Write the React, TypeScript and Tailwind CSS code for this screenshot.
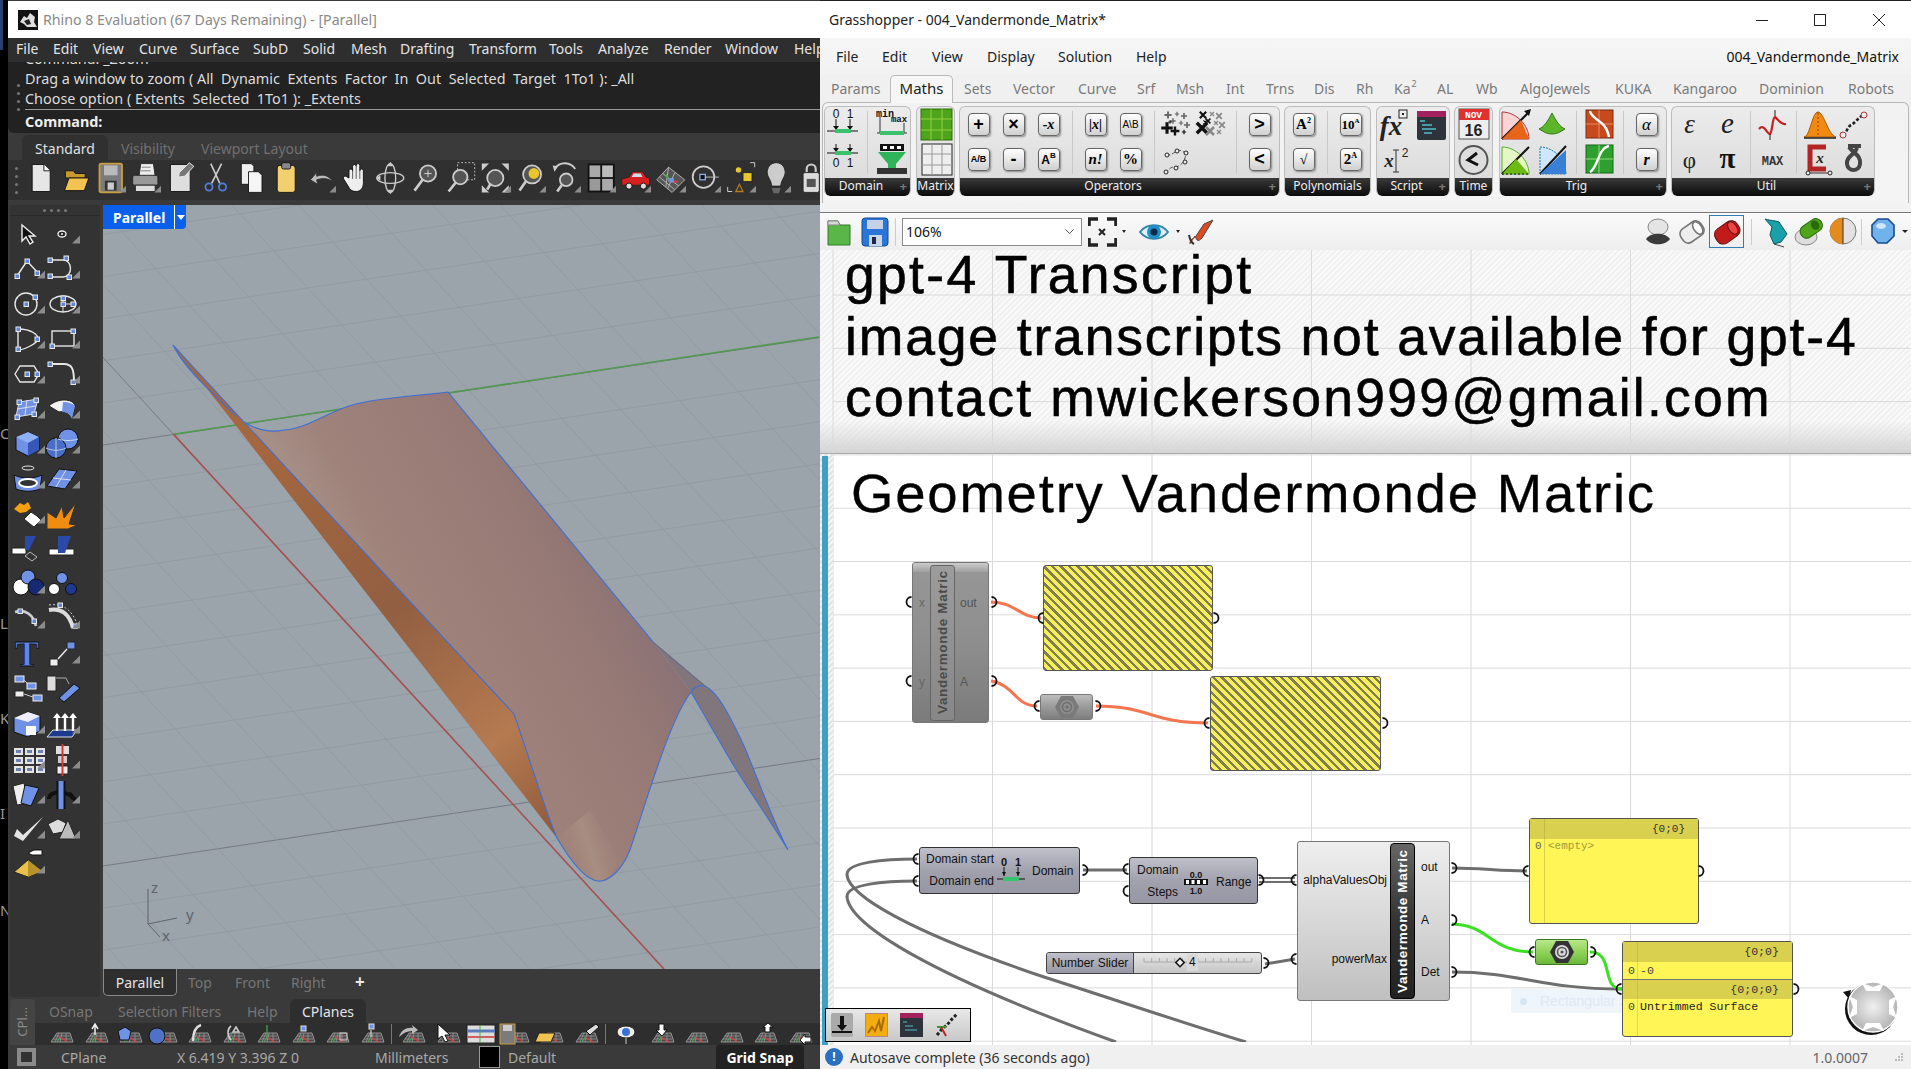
import React from "react";

const UI = "[font-family:'Noto_Sans',sans-serif]";
const AR = "[font-family:'Liberation_Sans',Arial,sans-serif]";
const MONO = "[font-family:'Liberation_Mono',monospace]";
const SERIF = "Liberation Serif, serif";
const SANS = "Liberation Sans, sans-serif";

type IP = { w?: number; h?: number; t?: boolean; children?: React.ReactNode };
const Ic = ({ w = 35, h = 35, t, children }: IP) => (
  <svg width={w} height={h} viewBox={`0 0 ${w} ${h}`} className="block shrink-0">
    {children}
    {t && <polygon points={`${w - 8},${h / 2 + 9} ${w},${h / 2 + 9} ${w},${h / 2 + 1}`} fill="#8c8c8c" />}
  </svg>
);
const P = ({ x, y }: { x: number; y: number }) => <rect x={x - 2} y={y - 2} width="4.5" height="4.5" fill="#5f86d8" stroke="#e8e8e8" strokeWidth="1" />;
const L = "#e6e6e6";
const B = "#6f92e6";

/* ---------- Rhino side toolbar ---------- */
const sideIcons: React.ReactNode[] = [
  <Ic><path d="M12 8l0 16 4-4 4 7 3-2-4-6 6 0z" fill="#111" stroke="#eee" strokeWidth="1.4" /></Ic>,
  <Ic t><ellipse cx="17" cy="17" rx="4" ry="3" fill="#222" stroke="#eee" strokeWidth="1.4" /><circle cx="17" cy="17" r="1" fill="#fff" /></Ic>,
  <Ic t><path d="M7 24L17 9l11 12" fill="none" stroke={L} strokeWidth="1.4" /><P x={7} y={24} /><P x={17} y={9} /><P x={27} y={21} /></Ic>,
  <Ic t><path d="M4 8h14c10 0 10 17 0 17H8" fill="none" stroke={L} strokeWidth="1.4" /><P x={5} y={8} /><P x={21} y={6} /><P x={5} y={24} /><P x={24} y={25} /></Ic>,
  <Ic t><circle cx="16" cy="17" r="11" fill="none" stroke={L} strokeWidth="1.4" /><P x={16} y={17} /><P x={25} y={10} /></Ic>,
  <Ic t><ellipse cx="18" cy="17" rx="13" ry="8" fill="none" stroke={L} strokeWidth="1.4" /><path d="M18 9v16M18 17h12" stroke={L} /><P x={18} y={11} /><P x={18} y={17} /><P x={28} y={17} /></Ic>,
  <Ic t><path d="M8 7c14 0 20 6 20 10S14 28 8 28z" fill="none" stroke={L} strokeWidth="1.4" /><P x={8} y={7} /><P x={27} y={17} /><P x={8} y={27} /></Ic>,
  <Ic t><rect x="7" y="9" width="22" height="15" fill="none" stroke={L} strokeWidth="1.4" /><P x={28} y={9} /><P x={7} y={24} /></Ic>,
  <Ic t><path d="M5 17l5-8h14l5 8-5 8H10z" fill="none" stroke={L} strokeWidth="1.4" /><P x={17} y={17} /><P x={27} y={17} /></Ic>,
  <Ic t><path d="M5 7h14c8 0 10 5 10 18" fill="none" stroke={L} strokeWidth="2" /><P x={5} y={7} /><P x={28} y={25} /></Ic>,
  <Ic t><path d="M9 10l19-3-4 15-18 3z" fill={B} stroke="#dde" /><path d="M17 8l-2 15M7 17l19-3" stroke="#dde" /><P x={9} y={10} /><P x={26} y={8} /><P x={7} y={25} /><P x={24} y={22} /></Ic>,
  <Ic t><path d="M4 14C12 6 28 6 30 14l-3 13c-4-8-10-8-13-7z" fill="#f2f2f2" stroke="#222" /><path d="M18 10c6 0 10 2 12 4l-3 13c-2-5-5-7-10-7z" fill={B} /></Ic>,
  <Ic t><path d="M6 10l12-5 11 5v13l-11 6-12-6z" fill={B} stroke="#111" /><path d="M6 10l12 6 11-6-11-5z" fill="#8fb0f5" /><path d="M18 16v13l11-6V10z" fill="#3558b8" /></Ic>,
  <Ic t><circle cx="23" cy="12" r="10" fill={B} stroke="#111" /><circle cx="11" cy="21" r="10" fill="#4a6ec8" stroke="#111" /><path d="M1 21c6 3 14 3 20 0M11 11v20" stroke="#bcd" fill="none" /><path d="M13 12c6 2 14 2 20 0" stroke="#cde" fill="none" /></Ic>,
  <Ic t><ellipse cx="18" cy="6" rx="6" ry="2" fill="none" stroke={L} /><path d="M4 13c8 4 20 4 28 0l-2 14c-8 3-16 3-24 0z" fill={B} stroke="#111" /><ellipse cx="18" cy="21" rx="9" ry="4" fill="#333" stroke="#fff" strokeWidth="2" /></Ic>,
  <Ic t><path d="M14 7l18 2-12 18-18-3z" fill={B} stroke="#111" /><path d="M21 8L11 25M8 16l18 2" stroke="#dde" /></Ic>,
  <Ic t><path d="M4 12l6-6 4 2 4-3 3 6-5 4-6 1z" fill="#f5a10f" /><path d="M14 22l7-7 6 4 4 4-7 7-4-3z" fill="#fff" stroke="#222" /></Ic>,
  <Ic><path d="M2 32V15l9 6 6-12 2 12 12-15-7 21 8 1-9 4z" fill="#f08c10" stroke="#333" /></Ic>,
  <Ic><rect x="2" y="16" width="14" height="6" fill="#fff" stroke="#222" /><path d="M15 4h11l-7 14-4 0z" fill="#2b4aa8" /><path d="M20 20l7 5-5 4-7-5z" fill="#333" stroke="#bbb" /></Ic>,
  <Ic><rect x="4" y="17" width="25" height="6" fill="#fff" stroke="#222" /><path d="M13 4h13l-6 17h-7z" fill="#2b4aa8" /></Ic>,
  <Ic t><circle cx="11" cy="20" r="8" fill="#fff" stroke="#111" /><circle cx="18" cy="10" r="7" fill={B} stroke="#111" /><circle cx="26" cy="20" r="8" fill="#152a70" stroke="#111" /></Ic>,
  <Ic><circle cx="9" cy="22" r="5.5" fill="#fff" stroke="#111" /><circle cx="17" cy="11" r="5.5" fill={B} stroke="#111" /><circle cx="26" cy="22" r="5.5" fill="#1c3a90" stroke="#111" /></Ic>,
  <Ic t><path d="M5 10c10-3 18 2 21 14" fill="none" stroke="#ccc" strokeWidth="2.6" /><P x={10} y={9} /><P x={24} y={19} /></Ic>,
  <Ic t><path d="M4 8c12-2 20 3 24 18" fill="none" stroke="#ddd" strokeWidth="4" /><path d="M4 3c14-2 24 5 29 22" fill="none" stroke="#ccc" strokeDasharray="2 2" /><P x={15} y={3} /><P x={30} y={24} /></Ic>,
  <Ic><text x="17" y="29" textAnchor="middle" fontFamily={SERIF} fontWeight="700" fontSize="36" fill="#5f86e8" stroke="#111" strokeWidth=".8">T</text></Ic>,
  <Ic t><rect x="5" y="22" width="8" height="7" fill="#eee" stroke="#222" /><rect x="22" y="5" width="8" height="7" fill={B} stroke="#222" /><path d="M13 22l9-10" stroke="#eee" strokeWidth="1.4" /></Ic>,
  <Ic><rect x="5" y="4" width="9" height="6" fill={B} stroke="#eee" /><rect x="17" y="11" width="9" height="6" fill={B} stroke="#eee" /><rect x="5" y="19" width="9" height="6" fill="#eee" stroke="#222" /><rect x="23" y="23" width="9" height="6" fill={B} stroke="#eee" /><path d="M14 8l4 4M14 22l9 3" stroke="#ccc" /></Ic>,
  <Ic><rect x="2" y="4" width="9" height="15" fill="#ddd" stroke="#222" /><path d="M11 6h10l3 6" fill="none" stroke="#aaa" /><path d="M14 26L29 12l6 4-16 14z" fill={B} stroke="#111" /></Ic>,
  <Ic t><path d="M4 11l14-6 12 4v15l-12 6-14-5z" fill={B} stroke="#111" /><path d="M4 11l14 4 12-6-12-4z" fill="#eef" /><rect x="16" y="19" width="10" height="9" fill="#fff" /></Ic>,
  <Ic t><path d="M2 30l6-7h24l-5 7z" fill="#1c3a90" stroke="#ddd" /><path d="M12 24V8M20 24V8M28 24V8" stroke="#fff" strokeWidth="2.4" /><path d="M8 11l4-5 4 5zM16 11l4-5 4 5zM24 11l4-5 4 5z" fill="#fff" /></Ic>,
  <Ic t><g fill="#e4e4e4">{[4, 15, 26].map((x) => [6, 15, 24].map((y) => <rect key={`${x}${y}`} x={x} y={y} width="9" height="7" />))}</g><g fill="#6f82b8">{[6, 17, 28].map((x) => [8, 17, 26].map((y) => <rect key={`${x}${y}`} x={x} y={y} width="5" height="3" />))}</g></Ic>,
  <Ic t><rect x="11" y="4" width="13" height="8" fill="#ddd" /><rect x="13" y="14" width="9" height="7" fill="#ccc" /><rect x="12" y="24" width="11" height="8" fill="#eee" stroke="#222" /><path d="M17.5 2v32" stroke="#d33" strokeWidth="2" /></Ic>,
  <Ic t><path d="M3 9l11-3 4 20-11 2z" fill="#eee" stroke="#222" /><path d="M15 8l14 3-8 18-10-3z" fill={B} stroke="#111" /></Ic>,
  <Ic t><path d="M4 22c0-10 22-8 24 0" fill="none" stroke="#111" strokeWidth="4" /><path d="M16 4v28" stroke="#111" strokeWidth="9" /><path d="M16 4v28" stroke="#6f92e6" strokeWidth="5" /><path d="M24 16l8 9" stroke="#111" strokeWidth="4" /></Ic>,
  <Ic t><path d="M4 24l9 5 20-24-20 18-6-6z" fill="#e4e4e4" /></Ic>,
  <Ic t><path d="M3 12l10-5 8 4-3 9-10 2z" fill="#ddd" stroke="#222" /><path d="M23 8l8 19H14z" fill="#bbb" stroke="#222" /></Ic>,
  <Ic t><path d="M4 25L18 13l14 11-14 6z" fill="#e8c04a" stroke="#222" /><path d="M18 13l14 11-14 6z" fill="#b8922a" /><path d="M18 6l6-3h8v5H22z" fill="#fff" stroke="#111" /></Ic>,
];

/* ---------- Rhino top toolbar ---------- */
const Tp = ({ t, children }: { t?: boolean; children: React.ReactNode }) => (
  <svg width="31.5" height="36" viewBox="0 0 35 40" className="mx-auto block">
    {children}
    {t && <polygon points="27,36 35,36 35,28" fill="#8c8c8c" />}
  </svg>
);
const topIcons: React.ReactNode[] = [
  <Tp><path d="M8 5h13l7 7v23H8z" fill="#e6e6e6" stroke="#111" /><path d="M21 5v7h7" fill="#fff" stroke="#111" /></Tp>,
  <Tp><path d="M6 12h9l2 3h11v5H6z" fill="#c89a2a" stroke="#111" /><path d="M5 34l5-14h22l-5 14z" fill="#f2c350" stroke="#111" /></Tp>,
  <Tp t><rect x="5" y="4" width="25" height="32" rx="2" fill="#7b7b7b" stroke="#c8a040" strokeWidth="2" /><rect x="10" y="6" width="15" height="11" fill="#bbb" /><rect x="11" y="23" width="13" height="11" fill="#333" /><rect x="14" y="25" width="7" height="8" fill="#ccc" /></Tp>,
  <Tp t><path d="M12 4h14l2 14H10z" fill="#eee" stroke="#222" /><rect x="3" y="17" width="28" height="11" rx="2" fill="#999" stroke="#222" /><path d="M6 28h22v7H6z" fill="#ddd" stroke="#222" /><path d="M13 8h10M12 12h11" stroke="#777" /></Tp>,
  <Tp><path d="M6 5h22v30H6z" fill="#dedede" stroke="#111" /><path d="M16 14L27 3l5 4-10 11-7 1z" fill="#777" stroke="#eee" /></Tp>,
  <Tp><path d="M12 4l10 22M24 4L13 26" stroke="#ccc" strokeWidth="1.8" /><circle cx="10" cy="30" r="4" fill="none" stroke="#4f7fd8" strokeWidth="2" /><circle cx="25" cy="30" r="4" fill="none" stroke="#4f7fd8" strokeWidth="2" /></Tp>,
  <Tp><path d="M7 4h11l3 3v20H7z" fill="#eee" stroke="#111" /><path d="M15 13h11l4 4v19H15z" fill="#f5f5f5" stroke="#111" /></Tp>,
  <Tp><rect x="8" y="6" width="20" height="30" rx="3" fill="#f2d070" stroke="#111" /><rect x="13" y="3" width="10" height="7" rx="2" fill="#888" stroke="#111" /></Tp>,
  <Tp t><path d="M6 22l7-8v4c8-3 14 0 18 6-6-4-11-4-18-2l1 5z" fill="#bbb" stroke="#333" /></Tp>,
  <Tp><path d="M10 20V12a2 2 0 014 0v-5a2 2 0 014 0v-1a2 2 0 014 0v6a2 2 0 014 0v13c0 6-3 10-8 10s-7-2-9-6l-5-8c-1-3 2-4 4-2z" fill="#eee" stroke="#111" /><path d="M14 12v9M18 7v14M22 8v13" stroke="#555" /></Tp>,
  <Tp><ellipse cx="17" cy="20" rx="15" ry="6" fill="none" stroke="#ccc" strokeWidth="1.5" /><ellipse cx="17" cy="20" rx="6" ry="16" fill="none" stroke="#ccc" strokeWidth="1.5" /><path d="M17 2l-3 5h6zM17 38l-3-5h6zM1 20l5-3v6z" fill="#ccc" /></Tp>,
  <Tp><circle cx="20" cy="15" r="9" fill="#555" stroke="#ccc" strokeWidth="2" /><path d="M14 22L5 34" stroke="#ccc" strokeWidth="3" /><path d="M16 15h8M20 11v8" stroke="#ddd" /></Tp>,
  <Tp><rect x="14" y="3" width="19" height="19" fill="none" stroke="#ccc" strokeDasharray="2 2" /><circle cx="17" cy="19" r="8" fill="#555" stroke="#ccc" strokeWidth="2" /><path d="M12 25L4 35" stroke="#ccc" strokeWidth="3" /></Tp>,
  <Tp t><circle cx="17" cy="20" r="9" fill="#555" stroke="#ccc" strokeWidth="2" /><path d="M12 26L8 33" stroke="#ccc" strokeWidth="3" /><path d="M2 4h8L2 12zM32 4h-8l8 8zM2 36v-8l8 8zM32 36v-8l-8 8z" fill="#ccc" /></Tp>,
  <Tp t><circle cx="19" cy="16" r="10" fill="#555" stroke="#ccc" strokeWidth="2" /><circle cx="21" cy="15" r="6" fill="#e8c72c" /><path d="M12 24L5 34" stroke="#ccc" strokeWidth="3" /></Tp>,
  <Tp t><path d="M5 10c6-9 18-8 23 0" fill="none" stroke="#ccc" strokeWidth="2" /><path d="M3 6l6 1-4 6z" fill="#ccc" /><circle cx="18" cy="22" r="7" fill="#555" stroke="#ccc" strokeWidth="2" /><path d="M13 28l-5 7" stroke="#ccc" strokeWidth="3" /></Tp>,
  <Tp t><rect x="3" y="4" width="30" height="32" fill="#111" /><rect x="5" y="6" width="12" height="13" fill="#aaa" /><rect x="19" y="6" width="12" height="13" fill="#bbb" /><rect x="5" y="21" width="12" height="13" fill="#999" /><rect x="19" y="21" width="12" height="13" fill="#aaa" /></Tp>,
  <Tp t><path d="M2 28v-7l8-2 4-6h11l4 6 4 1v8z" fill="#d6201f" stroke="#222" /><path d="M15 15h8l2 4H13z" fill="#cde" /><circle cx="10" cy="29" r="3.4" fill="#ddd" stroke="#111" /><circle cx="26" cy="29" r="3.4" fill="#ddd" stroke="#111" /></Tp>,
  <Tp t><path d="M2 22L15 8l18 14-14 14z" fill="#555" stroke="#bbb" /><path d="M8.500 15l18 14M15 8l-3 22M22 14l-8 18M5 19l17 14" stroke="#bbb" /><path d="M12 16l5 8" stroke="#4ab04a" strokeWidth="2" /><path d="M17 24l9 0" stroke="#d04040" strokeWidth="2" /><rect x="15" y="20" width="6" height="5" fill="#6f92e6" /></Tp>,
  <Tp t><circle cx="15" cy="19" r="12" fill="none" stroke="#ccc" strokeWidth="2" /><rect x="11" y="16" width="6" height="6" fill="#111" stroke="#8fb0f0" strokeWidth="1.4" /><path d="M17 19h15" stroke="#ccc" /></Tp>,
  <Tp t><circle cx="15" cy="11" r="3" fill="#e8c72c" /><rect x="20" y="14" width="10" height="10" fill="#e8c72c" stroke="#222" /><path d="M16 27l-4 8h8z" fill="none" stroke="#b47a20" strokeWidth="1.4" /><path d="M28 3h5v5M3 30v5h5" fill="none" stroke="#ddd" /></Tp>,
  <Tp t><path d="M18 3c7 0 10 6 10 11 0 5-5 9-5 15H13c0-6-5-10-5-15 0-5 3-11 10-11z" fill="#ccc" stroke="#222" /><path d="M13 31h10l-2 6h-6z" fill="#666" /></Tp>,
  <Tp t><path d="M13 14v-4a5 5 0 0110 0v4" fill="none" stroke="#ccc" strokeWidth="2.4" /><rect x="9" y="14" width="18" height="22" rx="2" fill="#ddd" stroke="#222" /><rect x="13" y="21" width="10" height="9" fill="#555" /></Tp>,
];

/* ---------- CPlane row ---------- */
const Gp = ({ children }: { children?: React.ReactNode }) => (
  <svg width="35" height="22" viewBox="0 0 35 22" className="block shrink-0">
    <path d="M8 19l6-9h13l3 9z" fill="#4a4a4a" stroke="#aaa" strokeWidth=".8" />
    <path d="M12 19l4-9M17 19l2-9M23 19l0-9M10 16h18M12 13h15" stroke="#aaa" strokeWidth=".6" />
    <path d="M17 14l-3 5" stroke="#3fae4b" strokeWidth="1.2" />
    <path d="M17 14l8 5" stroke="#d64040" strokeWidth="1.2" />
    {children}
  </svg>
);
const up = <path d="M17 12V2M14 6l3-5 3 5" stroke="#eee" strokeWidth="1.5" fill="none" />;
const cpIcons: React.ReactNode[] = [
  <Gp />, <Gp>{up}</Gp>, <Gp><path d="M6 8l7-4 6 4-2 9H8z" fill="#6f92e6" stroke="#111" /></Gp>,
  <Gp><circle cx="10" cy="13" r="8" fill="#4f72c8" stroke="#111" /></Gp>, <Gp><path d="M20 2c-6 2-8 8-8 16" stroke="#ddd" strokeWidth="2.4" fill="none" /></Gp>,
  <Gp><path d="M15 3c-4 3-4 10 0 14M20 4l3 5h-6z" stroke="#ccc" fill="none" strokeWidth="1.6" /></Gp>,
  <Gp><path d="M17 14V2" stroke="#3fae4b" strokeWidth="1.2" /></Gp>, <Gp><rect x="16" y="3" width="5" height="5" fill="#6f92e6" stroke="#ddd" /></Gp>, <Gp><rect x="21" y="10" width="7" height="7" fill="none" stroke="#ccc" /></Gp>,
  <Gp><rect x="15" y="1" width="5" height="5" fill="#6f92e6" stroke="#ddd" /><path d="M17 7v7" stroke="#eee" /></Gp>, null,
  <Gp><path d="M4 14c2-7 8-10 14-9l-1-3 6 5-6 4 0-3c-5 0-9 2-13 6z" fill="#bbb" /></Gp>, <Gp><path d="M8 1v15l4-3 3 6 3-1-3-6h5z" fill="#fff" stroke="#111" /></Gp>,
  <svg width="35" height="22" viewBox="0 0 35 22" className="block shrink-0"><rect x="3" y="2" width="28" height="18" fill="#ddd" stroke="#222" /><path d="M3 8h28" stroke="#5a7ac0" strokeWidth="3" /><path d="M3 14h28" stroke="#d06060" strokeWidth="2" /><path d="M16 2v18" stroke="#3fae4b" /></svg>,
  <Gp><rect x="1" y="1" width="15" height="20" fill="#7b7b7b" stroke="#c8a040" /><rect x="4" y="2" width="9" height="6" fill="#ccc" /></Gp>, <Gp><path d="M2 19l4-9h16l-4 9z" fill="#f2c350" stroke="#222" /></Gp>, <Gp><path d="M18 8L28 1l3 3-9 8z" fill="#ddd" stroke="#111" /></Gp>, null,
  <svg width="35" height="22" viewBox="0 0 35 22" className="block shrink-0"><ellipse cx="17" cy="9" rx="9" ry="6" fill="#eee" stroke="#222" /><circle cx="17" cy="9" r="4" fill="#3b6fd8" /><path d="M17 15v6" stroke="#ccc" /></svg>,
  <Gp><path d="M15 1h5v6h3l-5 6-6-6h3z" fill="#fff" stroke="#111" /></Gp>, <Gp />, <Gp />, <Gp><path d="M23 9h-5v-5h-2l5-4 5 4h-3z" fill="#fff" stroke="#111" /></Gp>, <Gp><path d="M23 14h6v5h-6v3l-5-5 5-6z" fill="#fff" stroke="#111" /></Gp>,
];

/* ---------- surface viewport ---------- */
function Viewport() {
  const green: number[] = [];
  for (let k = -8; k < 24; k++) green.push(445 + k * 42.1);
  const red: number[] = [];
  for (let k = -18; k < 22; k++) red.push(k);
  return (
    <svg width="717" height="764" viewBox="103 205 717 764" className="block">
      <defs>
        <linearGradient id="surf" gradientUnits="userSpaceOnUse" x1="290" y1="620" x2="640" y2="430">
          <stop offset="0" stopColor="#a3857c" />
          <stop offset=".17" stopColor="#a58f86" />
          <stop offset=".3" stopColor="#9f827a" />
          <stop offset=".62" stopColor="#977a75" />
          <stop offset=".86" stopColor="#866f75" />
          <stop offset="1" stopColor="#8c747a" />
        </linearGradient>
        <linearGradient id="oran" gradientUnits="userSpaceOnUse" x1="250" y1="440" x2="560" y2="830">
          <stop offset="0" stopColor="#a5673f" />
          <stop offset=".45" stopColor="#925f42" />
          <stop offset=".78" stopColor="#b57a50" />
          <stop offset="1" stopColor="#8f5a3c" />
        </linearGradient>
        <linearGradient id="tipg" gradientUnits="userSpaceOnUse" x1="560" y1="860" x2="620" y2="840">
          <stop offset="0" stopColor="#a88a7c" stopOpacity="0" />
          <stop offset=".5" stopColor="#b8a292" stopOpacity=".4" />
          <stop offset="1" stopColor="#a88a7c" stopOpacity="0" />
        </linearGradient>
      </defs>
      <rect x="103" y="205" width="717" height="764" fill="#9ba3ab" />
      {green.map((y, i) => (
        <line key={i} x1="103" y1={y} x2="820" y2={y - 0.15 * 717} stroke={(i - 8) % 10 === 0 ? "#757b82" : "#929aa2"} strokeWidth="1" />
      ))}
      {red.map((k) => {
        const ox = 173.6 + k * 59;
        const oy = 434.4 - k * 59 * 0.15;
        return <line key={k} x1={ox - 400} y1={oy - 436} x2={ox + 700} y2={oy + 763} stroke={k === 0 ? "#777d84" : "#929aa2"} strokeWidth="1" />;
      })}
      <line x1="173.600" y1="434.400" x2="819" y2="337" stroke="#4f9a4c" strokeWidth="1.6" />
      <line x1="173.600" y1="434.400" x2="664" y2="969" stroke="#a85050" strokeWidth="1.6" />
      {/* far wing */}
      <path d="M654 643L705 686C718 692 730 716 745 748C760 785 775 825 788 850C770 820 745 785 728 756L691 692Z" fill="#80767b" />
      {/* left sliver */}
      <path d="M173 345L244 422L236 416C215 395 185 370 173 345Z" fill="#7e7073" />
      {/* orange side */}
      <path d="M173 345L244 422L514 714C530 760 545 810 557 838Z" fill="url(#oran)" />
      {/* main sheet */}
      <path d="M244 422C260 432 275 432 284 430C310 428 330 410 356 404C390 396 420 396 448 392L654 643L691 692C670 720 650 790 630 850C620 875 605 882 598 881C585 880 570 860 557 838C545 810 530 760 514 714Z" fill="url(#surf)" />
      <path d="M557 838C570 860 585 880 598 881C605 882 612 875 620 860L590 810Z" fill="url(#tipg)" />
      <g fill="none" stroke="#3f6fd4" strokeWidth="1.1">
        <path d="M173 345L244 422L514 714C530 760 545 810 557 838C570 860 585 880 598 881C605 882 620 875 630 850C650 790 670 720 691 692C695 686 700 685 705 686C718 692 730 716 745 748C760 785 775 825 788 850C770 820 745 785 728 756L691 692" />
        <path d="M173 345C185 370 215 395 236 416" />
        <path d="M244 422C260 432 275 432 284 430C310 428 330 410 356 404C390 396 420 396 448 392L654 643" />
        <path d="M654 643L705 686" stroke="#6a6a88" />
      </g>
      <g stroke="#5e656c" fill="none" strokeWidth="1">
        <path d="M148 889V924L177 918M148 924L160 937" />
      </g>
      <g fontFamily="Noto Sans, sans-serif" fontSize="15" fill="#5e656c">
        <text x="151" y="893">z</text>
        <text x="186" y="920">y</text>
        <text x="162" y="941">x</text>
      </g>
    </svg>
  );
}

/* ---------- Left window ---------- */
const rhMenu = [
  ["File", "w-[37px]"], ["Edit", "w-[40px]"], ["View", "w-[46px]"], ["Curve", "w-[51px]"], ["Surface", "w-[63px]"], ["SubD", "w-[50px]"], ["Solid", "w-[48px]"],
  ["Mesh", "w-[49px]"], ["Drafting", "w-[69px]"], ["Transform", "w-[80px]"], ["Tools", "w-[49px]"], ["Analyze", "w-[66px]"], ["Render", "w-[61px]"], ["Window", "w-[69px]"], ["Help", "w-[40px]"],
];

function Handle() {
  return (
    <div className="flex w-[14px] shrink-0 flex-col items-center justify-center gap-[5px]">
      {[0, 1, 2, 3].map((i) => <span key={i} className="h-[3px] w-[3px] rounded-full bg-[#777]" />)}
    </div>
  );
}

function LeftWindow() {
  return (
    <div className={`flex h-[1069px] w-[820px] shrink-0 bg-black ${UI}`}>
      <div className="flex w-[8px] shrink-0 flex-col items-start overflow-hidden text-[15px] leading-[20px] text-[#999]">
        <span className="mb-[22px] h-[50px] w-[3px] bg-[#2b3f73]" />
        <span className="mt-[351px]">C</span>
        <span className="mt-[170px]">L</span>
        <span className="mt-[75px]">K</span>
        <span className="mt-[75px]">I</span>
        <span className="mt-[77px]">N</span>
      </div>
      <div className="flex w-[812px] flex-col overflow-hidden bg-[#3a3a3a]">
        {/* title */}
        <div className="mt-[1px] flex h-[37px] shrink-0 items-center gap-[5px] bg-white pl-[10px] text-[14.200px] text-[#8a8a8a]">
          <svg width="20" height="20" viewBox="0 0 20 20" className="shrink-0">
            <rect width="20" height="20" fill="#111" />
            <path d="M2 12l4-6 3 2 3-5 5 4-1 5 3 5H9l-3-3z" fill="#ddd" />
            <path d="M6 11l5-2 2 5-4 1z" fill="#222" />
          </svg>
          <span className="whitespace-pre">Rhino 8 Evaluation (67 Days Remaining) - [Parallel]</span>
        </div>
        {/* menu */}
        <div className="flex h-[24px] shrink-0 items-center overflow-hidden bg-[#2e2e2e] pb-[3px] pl-[8px] text-[14px] text-[#e4e4e4]">
          {rhMenu.map(([t, c]) => <span key={t} className={`shrink-0 ${c}`}>{t}</span>)}
        </div>
        {/* command */}
        <div className="flex h-[71px] shrink-0 overflow-hidden rounded-bl-[6px] bg-[#222] pl-[3px] text-[14.400px] text-[#dcdcdc]">
          <Handle />
          <div className="flex min-w-0 flex-1 flex-col">
            <div className="-mt-[13px] h-[20px] leading-[20px]">Command: _Zoom</div>
            <div className="flex h-[20px] items-center whitespace-pre">Drag a window to zoom ( All  Dynamic  Extents  Factor  In  Out  Selected  Target  1To1 ): _All</div>
            <div className="flex h-[20px] items-center whitespace-pre">Choose option ( Extents  Selected  1To1 ): _Extents</div>
            <div className="flex h-[24px] items-center border-t border-[#9a9a9a] font-bold text-[#eee]">Command:</div>
          </div>
        </div>
        <div className="h-[2px] shrink-0 bg-[#3a3a3a]" />
        {/* toolbar tabs */}
        <div className="flex h-[25px] shrink-0 items-end pl-[14px] text-[14px] text-[#707070]">
          <span className="flex h-[25px] w-[86px] items-center justify-center rounded-t-[6px] bg-[#303030] pt-[2px] text-[#e0e0e0]">Standard</span>
          <span className="ml-[13px] flex h-[25px] w-[80px] items-center pt-[2px]">Visibility</span>
          <span className="flex h-[25px] items-center pt-[2px]">Viewport Layout</span>
        </div>
        {/* toolbar */}
        <div className="flex h-[40px] shrink-0 overflow-hidden bg-[#303030] pl-[1px]">
          <Handle />
          {topIcons.map((n, i) => <span key={i} className="block w-[35px] shrink-0">{n}</span>)}
        </div>
        <div className="h-[5px] shrink-0" />
        {/* middle */}
        <div className="flex h-[792px] shrink-0">
          <div className="ml-[2px] mr-[3px] flex w-[90px] shrink-0 flex-col rounded-[4px] bg-[#333]">
            <div className="flex h-[11px] items-center justify-center gap-[4px] border-b border-[#2a2a2a]">
              {[0, 1, 2, 3].map((i) => <span key={i} className="h-[3px] w-[3px] rounded-full bg-[#777]" />)}
            </div>
            <div className="grid grid-cols-[35px_35px] auto-rows-[35px] pt-[1px]">
              {sideIcons.map((n, i) => <span key={i} className="block">{n}</span>)}
            </div>
          </div>
          <div className="flex w-[717px] flex-col">
            <div className="relative h-[764px] overflow-hidden">
              <Viewport />
              <div className="absolute left-0 top-0 flex h-[24px] w-[83px] items-center rounded-br-[4px] bg-[#0a60ea] pl-[10px] text-[14px] font-bold text-white">
                <span>Parallel</span>
                <span className="ml-auto flex h-full w-[12px] items-center justify-center border-l border-white">
                  <span className="h-0 w-0 border-x-[4px] border-t-[5px] border-x-transparent border-t-white" />
                </span>
              </div>
            </div>
            <div className="flex h-[28px] items-start text-[14px] text-[#767676]">
              <span className="flex h-[27px] w-[74px] items-center justify-center rounded-b-[5px] border border-t-0 border-[#8a8a8a] bg-[#2e2e2e] text-[#e4e4e4]">Parallel</span>
              <span className="ml-[11px] mt-[3px] w-[47px]">Top</span>
              <span className="mt-[3px] w-[56px]">Front</span>
              <span className="mt-[3px] w-[64px]">Right</span>
              <span className="mt-[3px] text-[17px] font-bold leading-[20px] text-[#e8e8e8]">+</span>
            </div>
          </div>
        </div>
        <div className="h-[2px] shrink-0" />
        {/* bottom */}
        <div className="flex h-[46px] shrink-0">
          <div className="ml-[2px] flex w-[25px] shrink-0 items-center justify-center rounded-t-[4px] bg-[#444] text-[13px] text-[#8a8a8a]">
            <span className="-rotate-90 whitespace-nowrap">CPl...</span>
          </div>
          <div className="flex min-w-0 flex-1 flex-col">
            <div className="flex h-[24px] shrink-0 items-center text-[14px] text-[#767676]">
              <span className="ml-[14px] w-[69px]">OSnap</span>
              <span className="w-[129px]">Selection Filters</span>
              <span className="w-[43px]">Help</span>
              <span className="flex h-[24px] w-[76px] items-center justify-center rounded-t-[6px] bg-[#2e2e2e] text-[#e4e4e4]">CPlanes</span>
            </div>
            <div className="flex h-[22px] shrink-0 items-center overflow-hidden bg-[#2e2e2e] pl-[8px]">
              {cpIcons.map((n, i) => n ? <span key={i} className="block w-[34.500px] shrink-0">{n}</span> : <span key={i} className="mx-[3px] h-[20px] w-px shrink-0 bg-[#777]" />)}
            </div>
          </div>
        </div>
        {/* status */}
        <div className="flex h-[24px] shrink-0 items-center text-[14px] text-[#a8a8a8]">
          <span className="ml-[9px] h-[18px] w-[19px] border-[4px] border-[#8a8a8a] bg-[#333]" />
          <span className="ml-[25px] w-[116px]">CPlane</span>
          <span className="w-[198px]">X 6.419 Y 3.396 Z 0</span>
          <span className="w-[104px]">Millimeters</span>
          <span className="h-[22px] w-[21px] border border-[#999] bg-black" />
          <span className="ml-[8px] w-[208px]">Default</span>
          <span className="flex h-[25px] w-[88px] items-center justify-center rounded-[3px] bg-[#222] font-bold text-white">Grid Snap</span>
        </div>
      </div>
    </div>
  );
}

/* ---------- Grasshopper ribbon ---------- */
const Btn = ({ children, cls = "" }: { children: React.ReactNode; cls?: string }) => (
  <span className="flex h-[35px] w-[35px] items-center justify-center">
    <span className={`flex h-[23px] w-[22px] items-center justify-center rounded-[4px] border border-[#666] bg-gradient-to-b from-white to-[#d0d0d0] text-black shadow-[1px_1px_2px_#8a8a8a] ${cls}`}>{children}</span>
  </span>
);
const Col = ({ children, cls = "" }: { children: React.ReactNode; cls?: string }) => <div className={`flex w-[35px] shrink-0 flex-col ${cls}`}>{children}</div>;
const Sep = ({ cls }: { cls: string }) => (
  <div className={`flex shrink-0 justify-center ${cls}`}><span className="my-[4px] w-px bg-[#c8c8c8]" /></div>
);
const Panel = ({ label, cls, plus, children, body = "" }: { label: string; cls: string; plus?: boolean; children: React.ReactNode; body?: string }) => (
  <div className={`flex h-[90px] shrink-0 flex-col overflow-hidden rounded-[6px] border border-b-0 border-[#bdbdbd] bg-gradient-to-b from-[#ececec] to-[#d9d9d9] ${cls}`}>
    <div className={`flex h-[71px] shrink-0 ${body}`}>{children}</div>
    <div className={`relative flex h-[18px] shrink-0 items-center justify-center rounded-b-[5px] bg-gradient-to-b from-[#3a3a3a] to-[#0c0c0c] pb-[3px] text-[12px] text-[#eee] ${plus ? "pr-[13px]" : ""}`}>
      {label}
      {plus && <span className="absolute right-[3px] top-[-1px] text-[13px] font-bold text-[#777]">+</span>}
    </div>
  </div>
);
const T = ({ x = 17.5, y, s = 12, f = SANS, w = 400, i, a = "middle", fill = "#111", children }: any) => (
  <text x={x} y={y} fontSize={s} fontFamily={f} fontWeight={w} fontStyle={i ? "italic" : "normal"} textAnchor={a} fill={fill}>{children}</text>
);
const MassIcon = ({ dark }: { dark?: boolean }) => (
  <Ic>
    {[[8, 8, 1.6], [17, 7, 1], [24, 9, 1.4], [13, 14, 1.2], [21, 16, 1], [27, 18, 1.4], [7, 21, 2.6], [15, 24, 2], [24, 25, 1], [10, 15, .8]].map(([x, y, r], i) => (
      dark
        ? <path key={i} d={`M${x - r * 2} ${y - r * 2}L${x + r * 2} ${y + r * 2}M${x + r * 2} ${y - r * 2}L${x - r * 2} ${y + r * 2}`} stroke={i % 3 === 0 ? "#111" : "#888"} strokeWidth={r * 1.3} />
        : <path key={i} d={`M${x - r * 2.2} ${y}H${x + r * 2.2}M${x} ${y - r * 2.2}V${y + r * 2.2}`} stroke={i > 5 ? "#111" : "#666"} strokeWidth={r * 1.2} />
    ))}
  </Ic>
);

function Ribbon() {
  return (
    <div className="mx-[2px] flex h-[101px] shrink-0 rounded-t-[6px] border border-b-0 border-[#b8b8b8] bg-gradient-to-b from-[#f2f2f2] to-[#f4f4f4] pl-[1px] pt-[3px]">
      <Panel label="Domain" plus cls="w-[87px]">
        <Col>
          <Ic><T x={11} y={11}>0</T><T x={25} y={11}>1</T><path d="M11 12v10M25 12v10M2 24h31" stroke="#111" /><path d="M8 19l3 4 3-4zM22 19l3 4 3-4z" fill="#111" /><rect x="10" y="22" width="16" height="4" fill="#39c26b" /></Ic>
          <Ic><path d="M2 11h31M11 2v9M25 2v9" stroke="#111" /><path d="M8 6l3 4 3-4zM22 6l3 4 3-4z" fill="#111" /><rect x="10" y="9" width="16" height="4" fill="#39c26b" /><T x={11} y={25}>0</T><T x={25} y={25}>1</T></Ic>
        </Col>
        <Sep cls="w-[14px]" />
        <Col>
          <Ic><T x={11} y={10} s={10} f="Liberation Mono, monospace" w={700}>min</T><T x={25} y={15} s={9} f="Liberation Mono, monospace" w={700}>max</T><path d="M3 26h30M6 10v16M30 16v10" stroke="#333" /><rect x="6" y="24" width="24" height="4" fill="#39c26b" /></Ic>
          <Ic><rect x="6" y="2" width="24" height="7" fill="#111" /><g fill="#fff"><rect x="9" y="4" width="4" height="3" /><rect x="16" y="4" width="4" height="3" /><rect x="23" y="4" width="4" height="3" /></g><path d="M4 10h28L22 22v4H14v-4z" fill="#2fb45a" /><rect x="3" y="26" width="30" height="6" fill="#333" /></Ic>
        </Col>
      </Panel>
      <Panel label="Matrix" cls="ml-[5px] w-[39px]" body="pl-[2px]">
        <Col>
          <Ic><rect x="2" y="2" width="31" height="31" fill="#4ea41a" stroke="#2c6a0c" /><path d="M12 2v31M23 2v31M2 12h31M2 23h31" stroke="#8fd23f" /></Ic>
          <Ic><rect x="3" y="2" width="30" height="31" fill="#eee" stroke="#222" /><path d="M13 2v31M23 2v31M3 12h30M3 23h30" stroke="#999" /></Ic>
        </Col>
      </Panel>
      <Panel label="Operators" plus cls="ml-[4px] w-[321px]" body="pl-[1px]">
        <Col><Btn cls={`${AR} text-[18px] font-bold`}>+</Btn><Btn cls={`${AR} text-[9px] font-bold`}>A/B</Btn></Col>
        <Col><Btn cls={`${AR} text-[18px] font-bold`}>×</Btn><Btn cls={`${AR} text-[18px] font-bold`}>-</Btn></Col>
        <Col><Btn cls="[font-family:'Liberation_Serif',serif] text-[14px] font-bold italic">-x</Btn><Btn cls={`${AR} text-[12px] font-bold`}>A<sup className="text-[8px]">B</sup></Btn></Col>
        <Sep cls="w-[12px]" />
        <Col><Btn cls="[font-family:'Liberation_Serif',serif] text-[14px] font-bold italic">|x|</Btn><Btn cls="[font-family:'Liberation_Serif',serif] text-[15px] font-bold italic">n!</Btn></Col>
        <Col><Btn cls={`${AR} text-[10px]`}>A\B</Btn><Btn cls="[font-family:'Liberation_Serif',serif] text-[15px] font-bold">%</Btn></Col>
        <Sep cls="w-[12px]" />
        <Col>
          <MassIcon />
          <Ic><path d="M5 31c3-1 4-6 9-6s9-3 11-9-4-9-8-7-5 4-9 4" fill="none" stroke="#555" strokeDasharray="4 2" /><g fill="#eee" stroke="#222"><circle cx="7" cy="13" r="2" /><circle cx="17" cy="9" r="2" /><circle cx="26" cy="11" r="2" /><circle cx="25" cy="20" r="2" /><circle cx="16" cy="26" r="2" /><circle cx="6" cy="30" r="2" /></g></Ic>
        </Col>
        <Col><MassIcon dark /></Col>
        <Sep cls="w-[12px]" />
        <Col><Btn cls={`${AR} text-[18px] font-bold`}>&gt;</Btn><Btn cls={`${AR} text-[18px] font-bold`}>&lt;</Btn></Col>
      </Panel>
      <Panel label="Polynomials" cls="ml-[4px] w-[87px]" body="pl-[1px]">
        <Col><Btn cls="[font-family:'Liberation_Serif',serif] text-[15px] font-bold">A<sup className="text-[8px]">2</sup></Btn><Btn cls="[font-family:'Liberation_Serif',serif] text-[14px]">√</Btn></Col>
        <Sep cls="w-[12px]" />
        <Col><Btn cls="[font-family:'Liberation_Serif',serif] text-[13px] font-bold">10<sup className="text-[7px]">A</sup></Btn><Btn cls="[font-family:'Liberation_Serif',serif] text-[15px] font-bold">2<sup className="text-[8px]">A</sup></Btn></Col>
      </Panel>
      <Panel label="Script" plus cls="ml-[5px] w-[74px]" body="gap-[2px]">
        <Col>
          <Ic><T x={14} y={28} s={27} f={SERIF} i w={700} fill="#222">fx</T><rect x="22" y="3" width="8" height="8" fill="#eee" stroke="#222" /><rect x="25" y="6" width="2" height="2" fill="#222" /></Ic>
          <Ic><T x={12} y={25} s={19} f={SERIF} i w={700} fill="#222">x</T><path d="M19 8v22M16 8h6M16 30h6" stroke="#333" /><T x={28} y={15} s={12} fill="#222">2</T></Ic>
        </Col>
        <Col>
          <Ic><rect x="3" y="4" width="29" height="29" rx="2" fill="#2e333b" /><rect x="3" y="4" width="29" height="6" fill="#a3215c" /><path d="M6 14h5M8 18h10M8 22h14M10 26h8" stroke="#4fc0c8" strokeWidth="1.4" /></Ic>
          <span />
        </Col>
      </Panel>
      <Panel label="Time" cls="ml-[4px] w-[39px]" body="pl-[1px]">
        <Col>
          <Ic><rect x="3" y="2" width="30" height="30" fill="#eee" stroke="#555" /><rect x="3" y="2" width="30" height="11" fill="#e03030" /><T y={11} s={9.500} w={700} fill="#fff" f="Liberation Mono, monospace">NOV</T><T y={29} s={16} w={700} fill="#222">16</T></Ic>
          <Ic><circle cx="17.500" cy="18" r="14" fill="#ddd" stroke="#555" strokeWidth="2" /><path d="M21 11l-9 7 10 5" fill="none" stroke="#111" strokeWidth="3" /></Ic>
        </Col>
      </Panel>
      <Panel label="Trig" plus cls="ml-[6px] w-[168px]">
        <Col>
          <Ic><path d="M2 32V5c14 0 27 13 27 27z" fill="#fbd5d5" stroke="#a33" /><path d="M2 32L29 5" stroke="#111" strokeWidth="2" /><path d="M2 32l19-19 8 19z" fill="#e8641a" /><path d="M24 4l7-2-2 7z" fill="#111" /></Ic>
          <Ic><path d="M2 32V5c14 0 27 13 27 27z" fill="#e4f7c4" stroke="#5a3" /><path d="M2 32L29 5" stroke="#111" strokeWidth="2" /><path d="M2 32l14-15 13 15z" fill="#6cbb12" /><path d="M2 32h27" stroke="#111" strokeDasharray="2 2" /></Ic>
        </Col>
        <Col>
          <Ic><path d="M4 22c5-2 9-8 13-16 4 8 8 14 13 16-5 3-8 5-13 5s-8-2-13-5z" fill="#5cb52a" stroke="#2f7a10" /></Ic>
          <Ic><path d="M5 32V5c14 0 26 13 26 27z" fill="#cfe6fb" stroke="#27a" strokeDasharray="2 1" /><path d="M5 32L31 4" stroke="#111" strokeWidth="2" /><path d="M5 32L31 8v24z" fill="#3a7fd6" /></Ic>
        </Col>
        <Sep cls="w-[12px]" />
        <Col>
          <Ic><rect x="4" y="3" width="27" height="28" fill="#c64a1e" stroke="#7a2a10" /><path d="M17 3v28M4 17h27" stroke="#e98a60" /><path d="M8 4c2 10 16 8 19 26" fill="none" stroke="#fff" strokeWidth="2.4" /></Ic>
          <Ic><rect x="4" y="3" width="27" height="28" fill="#2fa02f" stroke="#14641a" /><path d="M17 3v28M4 17h27" stroke="#8fdc7a" /><path d="M8 30c8-4 8-24 19-26" fill="none" stroke="#fff" strokeWidth="2.4" /></Ic>
        </Col>
        <Sep cls="w-[12px]" />
        <Col><Btn cls="[font-family:'Liberation_Serif',serif] text-[17px] italic">α</Btn><Btn cls="[font-family:'Liberation_Serif',serif] text-[16px] font-bold italic">r</Btn></Col>
      </Panel>
      <Panel label="Util" plus cls="ml-[4px] w-[204px]">
        <Col>
          <Ic><T y={26} s={27} f={SERIF} i fill="#222">ε</T></Ic>
          <Ic><T y={26} s={23} f={SERIF} fill="#222">φ</T></Ic>
        </Col>
        <Col cls="ml-[3px]">
          <Ic><T y={26} s={29} f={SERIF} i fill="#222">e</T></Ic>
          <Ic><T y={26} s={29} f={SERIF} w={700} fill="#111">π</T></Ic>
        </Col>
        <Sep cls="w-[10px]" />
        <Col>
          <Ic><path d="M4 22c5-6 8 5 11 5 3-4 2-16 5-17 3 2 6 8 11 7" fill="none" stroke="#c32020" strokeWidth="2.2" /><path d="M20 3v6M15 27v6" stroke="#222" /></Ic>
          <Ic><T y={23} s={12} w={700} f="Liberation Mono, monospace" fill="#333">MAX</T></Ic>
        </Col>
        <Sep cls="w-[12px]" />
        <Col>
          <Ic><path d="M2 30c6 0 8-25 14-25s10 23 18 25z" fill="#f28a10" stroke="#a85a08" /><path d="M16 6v24" stroke="#933" strokeDasharray="2 2" /><path d="M2 31h32" stroke="#222" strokeWidth="1.5" /></Ic>
          <Ic><path d="M24 5H8v22h16" fill="none" stroke="#b32424" strokeWidth="5" /><T x={18} y={21} s={15} f={SERIF} i w={700} fill="#222">x</T><path d="M5 31h24" stroke="#333" /><circle cx="6" cy="31" r="2" fill="#eee" stroke="#222" /><circle cx="28" cy="31" r="2" fill="#eee" stroke="#222" /></Ic>
        </Col>
        <Col>
          <Ic><path d="M6 28c4-2 4-8 8-10s6-6 12-10" fill="none" stroke="#222" strokeWidth="2.6" strokeDasharray="3 2" /><circle cx="6" cy="28" r="3" fill="#eee" stroke="#a33" /><circle cx="27" cy="8" r="3" fill="#eee" stroke="#a33" /></Ic>
          <Ic><path d="M11 4h13M12 5c5 7 12 8 11 17-1 8-12 8-13 0-1-8 8-9 10-16" fill="none" stroke="#444" strokeWidth="4" /></Ic>
        </Col>
      </Panel>
    </div>
  );
}

/* ---------- Grasshopper toolbar ---------- */
const Sph = ({ children, w = 34 }: { children: React.ReactNode; w?: number }) => <svg width={w} height="32" viewBox={`0 0 ${w} 32`} className="block shrink-0">{children}</svg>;
function GhToolbar() {
  return (
    <div className="flex h-[38px] shrink-0 items-center border-t border-[#777] bg-gradient-to-b from-[#fafafa] to-[#eeeeee] pl-[7px] pr-[3px]">
      <svg width="24" height="28" viewBox="0 0 24 28" className="shrink-0"><path d="M1 3h10l2 4h10v20H1z" fill="#5bb64a" stroke="#2f7a24" /><path d="M1 3h10l2 4H1z" fill="#d8d8d8" stroke="#888" /></svg>
      <svg width="28" height="30" viewBox="0 0 28 30" className="ml-[10px] shrink-0"><rect x="1" y="1" width="26" height="28" rx="3" fill="#2a75d6" stroke="#144a96" /><rect x="6" y="3" width="16" height="9" fill="#c5d2e6" /><rect x="8" y="18" width="13" height="11" fill="#c8d6ea" /><rect x="11" y="20" width="4" height="7" fill="#224" /></svg>
      <span className="ml-[6px] h-[28px] w-px bg-[#ccc]" />
      <div className={`ml-[6px] flex h-[28px] w-[180px] shrink-0 items-center justify-between border border-[#8a8a8a] bg-white pl-[3px] pr-[7px] text-[14px] text-[#111] ${UI}`}>
        106%
        <svg width="9" height="5" viewBox="0 0 9 5"><path d="M.5.5l4 4 4-4" fill="none" stroke="#555" /></svg>
      </div>
      <svg width="29" height="30" viewBox="0 0 29 30" className="ml-[6px] shrink-0"><path d="M1 9V2h9M19 2h9v7M1 21v7h9M28 21v7h-9" fill="none" stroke="#222" strokeWidth="3.5" /><path d="M11 12l6 6M17 12l-6 6" stroke="#222" strokeWidth="2" /></svg>
      <span className="ml-[5px] h-0 w-0 border-x-[2.500px] border-t-[3px] border-x-transparent border-t-[#222]" />
      <svg width="30" height="22" viewBox="0 0 30 22" className="ml-[13px] shrink-0"><path d="M1 11C8 2 22 2 29 11 22 20 8 20 1 11z" fill="#e4eef6" stroke="#2f86a8" strokeWidth="2" /><circle cx="15" cy="11" r="7" fill="#1e8fc8" /><circle cx="15" cy="11" r="3.500" fill="#0c2b4a" /></svg>
      <span className="ml-[7px] h-0 w-0 border-x-[2.500px] border-t-[3px] border-x-transparent border-t-[#222]" />
      <svg width="26" height="28" viewBox="0 0 26 28" className="ml-[8px] shrink-0"><path d="M2 26c0-6 3-4 5-8 2 5 3 6 7 2L25 2l-9 4-8 12" fill="#e04a20" stroke="#444" /><path d="M1 17c1 5 3 8 5 9" fill="none" stroke="#333" strokeWidth="2" /></svg>
      <div className="ml-auto flex items-center">
        <Sph w={28}><ellipse cx="14" cy="11" rx="10" ry="8" fill="#e4e4e4" stroke="#888" /><path d="M2 23c5-7 19-7 24 0-5 7-19 7-24 0z" fill="#3a3a3a" /></Sph>
        <span className="ml-[5px]"><Sph w={30}><g transform="rotate(-35 15 16)"><rect x="3" y="8" width="24" height="16" rx="6" fill="#eee" stroke="#777" strokeWidth="1.6" /><ellipse cx="22" cy="16" rx="4" ry="7" fill="#fff" stroke="#777" strokeWidth="1.6" /></g></Sph></span>
        <div className="ml-[2px] flex h-[33px] w-[35px] items-center justify-center border border-[#2f7cb8]">
          <svg width="28" height="28" viewBox="0 0 28 28"><g transform="rotate(-35 14 14)"><rect x="1" y="6" width="26" height="17" rx="7" fill="#c11b1b" stroke="#611" /><ellipse cx="21" cy="14" rx="4" ry="7" fill="#e44" stroke="#611" /></g></svg>
        </div>
        <span className="ml-[7px] mr-[6px] h-[26px] w-px bg-[#ccc]" />
        <span className="ml-[4px]"><Sph w={28}><path d="M3 3c7 2 8 1 14 3l8 12-6 8-7 2-4-9 2-8z" fill="#1aa0a8" stroke="#0a5a60" /><path d="M12 28L22 31" stroke="#444" /></Sph></span>
        <span className="ml-[4px]"><Sph w={30}><ellipse cx="12" cy="21" rx="11" ry="8" fill="#ddd" stroke="#888" /><g transform="rotate(-35 17 12)"><rect x="5" y="6" width="24" height="13" rx="6" fill="#4ea41a" stroke="#2a6a0a" /><ellipse cx="22" cy="12" rx="4" ry="5" fill="#2a6a0a" /></g></Sph></span>
        <span className="ml-[5px]"><Sph w={28}><circle cx="14" cy="15" r="13" fill="#e2e2e2" stroke="#777" /><path d="M14 2a13 13 0 000 26z" fill="#e58a1c" /><path d="M14 2v26" stroke="#333" /></Sph></span>
        <span className="ml-[4px] mr-[5px] h-[26px] w-px bg-[#ccc]" />
        <span className="ml-[3px]"><Sph w={26}><path d="M8 3h10l6 6v11l-7 7H8l-6-7V9z" fill="#6fb2ec" stroke="#1a4a90" strokeWidth="1.6" /><ellipse cx="11" cy="10" rx="5" ry="3" fill="#cfe6fb" /></Sph></span>
        <span className="ml-[6px] h-0 w-0 border-x-[3px] border-t-[3px] border-x-transparent border-t-[#222]" />
      </div>
    </div>
  );
}

/* ---------- Grasshopper canvas ---------- */
const vLines = [833, 992.500, 1152, 1311.500, 1471, 1630.500, 1790];
const hLines = Array.from({ length: 15 }, (_, i) => 295 + i * 53.300);

const Grid = ({ y, h }: { y: number; h: number }) => (
  <svg width="1091" height={h} viewBox={`820 ${y} 1091 ${h}`} className="absolute left-0 top-0 block">
    {vLines.map((x) => <line key={x} x1={x} y1={y} x2={x} y2={y + h} stroke="#dadada" />)}
    {hLines.map((v) => <line key={v} x1="833" y1={v} x2="1911" y2={v} stroke="#dadada" />)}
  </svg>
);

const Arc = ({ x, y, side }: { x: number; y: number; side: "l" | "r" }) => (
  <path d={side === "l" ? `M${x + 1.500} ${y - 5}A5 5 0 0 0 ${x + 1.500} ${y + 5}` : `M${x - 1.500} ${y - 5}A5 5 0 0 1 ${x - 1.500} ${y + 5}`} fill="none" stroke="#111" strokeWidth="1.800" />
);

const relayIcon = (dark: boolean) => (
  <svg width="26" height="24" viewBox="0 0 26 24">
    <path d="M7 1h12l6 11-6 11H7L1 12z" fill={dark ? "#333" : "#7a7a7a"} />
    <circle cx="13" cy="12" r="7" fill={dark ? "#ddd" : "#8e8e8e"} />
    <circle cx="13" cy="12" r="4.500" fill="none" stroke={dark ? "#555" : "#6e6e6e"} strokeWidth="1.600" />
    <circle cx="13" cy="12" r="1.600" fill={dark ? "#555" : "#6e6e6e"} />
  </svg>
);

function Canvas() {
  const wireG = "#6e6e6e";
  return (
    <div className="relative h-[591px] bg-white">
      <Grid y={454} h={591} />
      <div className="absolute left-0 top-0 h-full w-[13px] bg-[repeating-linear-gradient(135deg,#e4e4e4_0,#e4e4e4_2px,#f4f4f4_2px,#f4f4f4_4px)]" />
      <div className="absolute left-[2px] top-[2px] h-[589px] w-[6px] bg-[#3f9fc4]" />
      <div className={`absolute left-[31px] top-[5px] whitespace-nowrap text-[54.500px] leading-[70px] tracking-[1.800px] text-black [-webkit-text-stroke:0.3px_#000] ${AR}`}>Geometry Vandermonde Matric</div>

      {/* disabled cluster */}
      <div className={`absolute left-[92px] top-[108px] flex h-[161px] w-[77px] overflow-hidden rounded-[3px] border border-[#777] bg-gradient-to-b from-[#979797] via-[#8e8e8e] to-[#7b7b7b] text-[12px] text-[#666] ${AR}`}>
        <div className="absolute inset-x-0 top-0 h-[9px] bg-gradient-to-b from-[#ccc] to-[#a0a0a0]" />
        <div className="relative ml-[6px] flex w-[11px] shrink-0 flex-col justify-around"><span>x</span><span>y</span></div>
        <div className="relative flex h-[156px] w-[25px] shrink-0 self-center items-center justify-center rounded-[3px] border border-[#666] bg-gradient-to-b from-[#9c9c9c] to-[#878787]">
          <span className="-rotate-90 whitespace-nowrap text-[13.500px] font-bold tracking-[.6px] text-[#4a4a4a]">Vandermonde Matric</span>
        </div>
        <div className="relative ml-[5px] flex flex-1 flex-col items-start justify-around"><span className="text-[#555]">out</span><span className="text-[#555]">A</span></div>
      </div>

      {/* preview-hatch panels */}
      <div className="absolute left-[223px] top-[111px] h-[106px] w-[170px] rounded-[3px] border border-[#555] bg-[repeating-linear-gradient(45deg,#827c55_0,#827c55_2.400px,#f5f05a_2.400px,#f5f05a_6px)]" />
      <div className="absolute left-[390px] top-[222px] h-[95px] w-[171px] rounded-[3px] border border-[#555] bg-[repeating-linear-gradient(45deg,#827c55_0,#827c55_2.400px,#f5f05a_2.400px,#f5f05a_6px)]" />

      {/* grey relay */}
      <div className="absolute left-[220px] top-[240px] flex h-[26px] w-[53px] items-center justify-center rounded-[3px] border border-[#777] bg-gradient-to-b from-[#bdbdbd] via-[#9a9a9a] to-[#7e7e7e]">{relayIcon(false)}</div>

      {/* domain */}
      <div className={`absolute left-[99px] top-[393px] flex h-[47px] w-[161px] items-center whitespace-nowrap rounded-[3px] border border-[#333] bg-gradient-to-b from-[#c0c0cb] via-[#a2a2ae] to-[#9696a4] text-[12px] text-[#111] ${AR}`}>
        <div className="ml-[6px] flex w-[68px] shrink-0 flex-col items-end gap-[7px] leading-[15px]"><span>Domain start</span><span>Domain end</span></div>
        <svg width="30" height="34" viewBox="0 0 30 34" className="ml-[2px] shrink-0">
          <text x="8" y="12" fontSize="11" fontFamily={SANS} fontWeight="700" textAnchor="middle" fill="#111">0</text>
          <text x="22" y="12" fontSize="11" fontFamily={SANS} fontWeight="700" textAnchor="middle" fill="#111">1</text>
          <path d="M8 13v9M22 13v9M1 25h28" stroke="#111" />
          <path d="M6 18l2 4 2-4zM20 18l2 4 2-4z" fill="#111" />
          <rect x="7" y="23" width="16" height="4" fill="#37c46e" />
        </svg>
        <span className="ml-[6px]">Domain</span>
      </div>

      {/* range */}
      <div className={`absolute left-[309px] top-[403px] flex h-[47px] w-[129px] items-center rounded-[3px] border border-[#333] bg-gradient-to-b from-[#c0c0cb] via-[#a2a2ae] to-[#9696a4] pt-[2px] text-[12px] text-[#111] ${AR}`}>
        <div className="ml-[7px] flex w-[41px] flex-col items-end gap-[7px] leading-[15px]"><span className="self-start">Domain</span><span>Steps</span></div>
        <svg width="26" height="28" viewBox="0 0 26 28" className="ml-[5px] shrink-0">
          <text x="13" y="10" fontSize="9" fontWeight="700" fontFamily={SANS} textAnchor="middle" fill="#111">0.0</text>
          <rect x="1" y="11" width="24" height="6" fill="#111" />
          <g fill="#fff"><rect x="3" y="12" width="3" height="4" /><rect x="8.500" y="12" width="3" height="4" /><rect x="14" y="12" width="3" height="4" /><rect x="20" y="12" width="3" height="4" /></g>
          <text x="13" y="26" fontSize="9" fontWeight="700" fontFamily={SANS} textAnchor="middle" fill="#111">1.0</text>
        </svg>
        <span className="ml-[7px]">Range</span>
      </div>

      {/* slider */}
      <div className={`absolute left-[226px] top-[498px] flex h-[22px] w-[216px] rounded-[3px] border border-[#444] bg-gradient-to-b from-[#e6e6e6] to-[#c6c6c6] text-[12px] text-[#111] ${AR}`}>
        <div className="flex w-[88px] items-center justify-center rounded-l-[3px] border-r border-[#444] bg-gradient-to-b from-[#c0c0cb] to-[#9696a4]">Number Slider</div>
        <div className="relative flex flex-1 items-center">
          <svg width="127" height="20" viewBox="0 0 127 20" className="block">
            <path d="M10 9h108" stroke="#aaa" />
            {Array.from({ length: 15 }, (_, i) => <path key={i} d={`M${10 + i * 7.700} 5v4`} stroke="#aaa" />)}
            <rect x="43" y="6.500" width="6" height="6" transform="rotate(45 46 9.500)" fill="#eee" stroke="#111" strokeWidth="1.500" />
          </svg>
          <span className="absolute left-[53px] top-[1px] bg-[#d8d8d8] px-[2px] text-[12px] leading-[17px]">4</span>
        </div>
      </div>

      {/* big component */}
      <div className={`absolute left-[477px] top-[387px] flex h-[160px] w-[153px] rounded-[3px] border border-[#777] bg-gradient-to-b from-[#eeeeee] via-[#d8d8d8] to-[#bfbfbf] text-[12px] text-[#111] ${AR}`}>
        <div className="flex w-[92px] shrink-0 flex-col items-end pr-[3px] pt-[31px]">
          <span className="h-[79px] leading-[15px]">alphaValuesObj</span>
          <span className="leading-[15px]">powerMax</span>
        </div>
        <div className="my-[1px] flex w-[25px] shrink-0 items-center justify-center rounded-[4px] border border-black bg-gradient-to-b from-[#666] via-[#333] to-[#222]">
          <span className="-rotate-90 whitespace-nowrap text-[13.500px] font-bold tracking-[.6px] text-white">Vandermonde Matric</span>
        </div>
        <div className="flex flex-col pl-[6px] pt-[18px] leading-[15px]">
          <span className="h-[53px]">out</span>
          <span className="h-[52px]">A</span>
          <span>Det</span>
        </div>
      </div>

      {/* text panels */}
      <div className={`absolute left-[709px] top-[364px] h-[106px] w-[170px] rounded-[3px] border border-[#555] bg-[#fff557] text-[11px] ${MONO}`}>
        <div className="flex h-[20px] items-center justify-end bg-[#d8d04e] pr-[13px] text-[#333]">{"{0;0}"}</div>
        <div className="flex h-[15px] items-center text-[#666]"><span className="w-[16px] pl-[5px]">0</span><span className="pl-[2px] text-[#a49b3a]">&lt;empty&gt;</span></div>
        <div className="absolute bottom-0 left-[14px] top-0 w-px bg-[#a09a3a] opacity-40" />
      </div>

      {/* watermark */}
      <div className={`absolute left-[691px] top-[535px] flex h-[24px] w-[200px] items-center rounded-[2px] bg-[#eef5fb] pl-[9px] text-[14px] text-[#dfe9f2] ${AR}`}>
        <span className="mr-[13px] h-[7px] w-[7px] rounded-full bg-[#d8e6f2]" />Rectangular Surface
      </div>

      {/* green relay */}
      <div className="absolute left-[715px] top-[485px] flex h-[26px] w-[53px] items-center justify-center rounded-[3px] border border-[#3a7a20] bg-gradient-to-b from-[#b8e88a] via-[#8fd25a] to-[#6cb83a]">{relayIcon(true)}</div>

      <div className={`absolute left-[802px] top-[487px] h-[96px] w-[171px] rounded-[3px] border border-[#555] bg-[#fff557] text-[11.600px] ${MONO}`}>
        <div className="flex h-[20px] items-center justify-end bg-[#d8d04e] pr-[13px] text-[#333]">{"{0;0}"}</div>
        <div className="flex h-[17px] items-center text-[#444]"><span className="w-[17px] pl-[5px]">0</span>-0</div>
        <div className="flex h-[20px] items-center justify-end border-t border-[#777] bg-[#d8d04e] pr-[13px] text-[#333]">{"{0;0;0}"}</div>
        <div className="flex h-[15px] items-center text-[#222]"><span className="w-[17px] pl-[5px] text-[#444]">0</span>Untrimmed Surface</div>
        <div className="absolute bottom-0 left-[14px] top-0 w-px bg-[#a09a3a] opacity-30" />
      </div>

      {/* wires and ports */}
      <svg width="1091" height="588" viewBox="820 454 1091 588" className="pointer-events-none absolute left-0 top-0 block">
        <g fill="none" stroke={wireG} strokeWidth="3">
          <path d="M917 859C885 859 846 862 847 875C849 895 905 930 1044 977C1110 998 1180 1022 1246 1042" />
          <path d="M917 881C885 881 846 884 847 897C850 925 930 975 1116 1042" />
          <path d="M1083 870H1127" />
          <path d="M1259 878H1295M1259 882H1295" strokeWidth="2" />
          <path d="M1265 964L1295 959" />
          <path d="M1452 868C1480 868 1500 871 1527 871" />
          <path d="M1452 972C1520 972 1540 989 1622 989" />
        </g>
        <g fill="none" stroke="#3be022" strokeWidth="3">
          <path d="M1452 924C1490 925 1490 952 1533 952" />
          <path d="M1590 952C1615 952 1600 989 1622 989" />
        </g>
        <g fill="none" stroke="#f47550" strokeWidth="3">
          <path d="M991 602C1015 602 1020 618 1041 618" />
          <path d="M991 681C1015 685 1015 706 1037 706" />
          <path d="M1096 706C1150 706 1150 723 1208 723" />
        </g>
        {[[910, 602], [910, 681]].map(([x, y]) => <Arc key={y} x={x} y={y} side="l" />)}
        {[[993, 602], [993, 681], [1215, 618], [1384, 723], [1097, 706], [1084, 870], [1260, 880], [1265, 963], [1700, 871], [1592, 952], [1795, 989], [1453, 868], [1453, 920], [1453, 972]].map(([x, y]) => <Arc key={`${x}${y}`} x={x} y={y} side="r" />)}
        {[[1042, 618], [1208, 723], [1038, 706], [917, 859], [917, 881], [1127, 869], [1127, 891], [1295, 880], [1295, 959], [1527, 871], [1533, 952], [1620, 989]].map(([x, y]) => <Arc key={`${x}${y}`} x={x} y={y} side="l" />)}
      </svg>

      {/* compass */}
      <svg width="58" height="56" viewBox="0 0 58 56" className="absolute left-[1021px] top-[526px] block">
        <defs><radialGradient id="disc"><stop offset="0" stopColor="#f0f0f0" /><stop offset="1" stopColor="#b4b4b4" /></radialGradient></defs>
        <circle cx="30" cy="29" r="26" fill="#111" />
        <path d="M2 12l8-2-2 9z" fill="#111" />
        <circle cx="32" cy="27" r="25" fill="url(#disc)" stroke="#fff" strokeWidth="1.500" />
        <g fill="#fff"><path d="M21 3l11 4 11-4-4 8H25zM8 16l4 11-4 11 8-4V20zM56 16l-4 11 4 11-8-4V20zM21 51l11-4 11 4-4-8H25z" /></g>
      </svg>

      {/* mini toolbar */}
      <div className="absolute left-[5px] top-[554px] flex h-[34px] w-[146px] items-center gap-[12px] border border-black bg-gradient-to-b from-[#e8e8e8] to-[#c8c8c8] pl-[5px]">
        <svg width="22" height="24" viewBox="0 0 22 24" className="shrink-0"><rect width="22" height="24" rx="2" fill="#aaa" /><path d="M9 3h4v9h3l-5 6-5-6h3z" fill="#111" /><path d="M1 19h20" stroke="#111" strokeWidth="2" /></svg>
        <svg width="23" height="24" viewBox="0 0 23 24" className="shrink-0"><rect x=".5" y=".5" width="22" height="23" fill="#f3ad10" stroke="#b88" /><path d="M3 20l4-6 3 4 4-10 2 10 3-14" fill="none" stroke="#a86a08" strokeWidth="2" /></svg>
        <svg width="23" height="24" viewBox="0 0 23 24" className="shrink-0"><rect width="23" height="24" fill="#2e333b" /><rect width="23" height="5" fill="#a3215c" /><path d="M3 9h4M5 13h8M5 17h12" stroke="#4fc0c8" /></svg>
        <svg width="24" height="24" viewBox="0 0 24 24" className="shrink-0"><path d="M2 22l5-6 5-4 5-6 5-5" stroke="#222" strokeWidth="3" strokeDasharray="3 2" fill="none" /><path d="M2 14h9" stroke="#2fa02f" strokeWidth="2" /><path d="M6 14l5 9" stroke="#c32020" strokeWidth="2" /></svg>
      </div>
    </div>
  );
}

function RightWindow() {
  const menu = [["File", "w-[46px]"], ["Edit", "w-[50px]"], ["View", "w-[55px]"], ["Display", "w-[71px]"], ["Solution", "w-[78px]"], ["Help", "w-[50px]"]];
  const tabsA = [["Sets", "w-[49px]"], ["Vector", "w-[65px]"], ["Curve", "w-[59px]"], ["Srf", "w-[39px]"], ["Msh", "w-[50px]"], ["Int", "w-[40px]"], ["Trns", "w-[48px]"], ["Dis", "w-[42px]"], ["Rh", "w-[38px]"]];
  const tabsB = [["AL", "w-[39px]"], ["Wb", "w-[44px]"], ["AlgoJewels", "w-[95px]"], ["KUKA", "w-[58px]"], ["Kangaroo", "w-[86px]"], ["Dominion", "w-[89px]"], ["Robots", "w-[60px]"]];
  return (
    <div className={`flex h-[1069px] w-[1091px] shrink-0 flex-col bg-[#f0f0f0] ${UI}`}>
      <div className="h-px shrink-0 bg-[#222]" />
      <div className="flex h-[37px] shrink-0 items-center bg-white pl-[9px] pr-[11px] text-[14px] text-[#222]">
        <span>Grasshopper - 004_Vandermonde_Matrix*</span>
        <div className="ml-auto flex items-center">
          <svg width="58" height="16" viewBox="0 0 58 16"><path d="M12 8.500h12" stroke="#222" /></svg>
          <svg width="58" height="16" viewBox="0 0 58 16"><rect x="12.500" y="2.500" width="11" height="11" fill="none" stroke="#222" /></svg>
          <svg width="40" height="16" viewBox="0 0 40 16"><path d="M13 2l12 12M25 2L13 14" stroke="#222" /></svg>
        </div>
      </div>
      <div className="flex h-[37px] shrink-0 items-center bg-gradient-to-b from-[#f6f6f6] to-[#f2f2f2] pl-[16px] pr-[12px] text-[14px] text-[#222]">
        {menu.map(([t, c]) => <span key={t} className={c}>{t}</span>)}
        <span className="ml-auto text-[14px] text-[#111]">004_Vandermonde_Matrix</span>
      </div>
      <div className="flex h-[27px] shrink-0 items-end whitespace-nowrap pl-[11px] text-[14px] text-[#7a7a7a]">
        <span className="flex h-[27px] w-[59px] items-center">Params</span>
        <span className="relative z-10 -mb-px mr-[11px] flex h-[28px] w-[63px] items-start justify-center rounded-t-[5px] border border-b-0 border-[#bbb] bg-[#f6f6f6] pt-[1px] text-[15px] text-[#222]">Maths</span>
        {tabsA.map(([t, c]) => <span key={t} className={`flex h-[27px] items-center ${c}`}>{t}</span>)}
        <span className="flex h-[27px] w-[43px] items-center">Ka<sup className="ml-[1px] text-[9px]">2</sup></span>
        {tabsB.map(([t, c]) => <span key={t} className={`flex h-[27px] items-center ${c}`}>{t}</span>)}
      </div>
      <Ribbon />
      <div className="h-[9px] shrink-0 bg-[#f2f2f2]" />
      <GhToolbar />
      <div className="relative h-[795px] shrink-0 overflow-hidden">
        <div className="relative h-[204px] overflow-hidden border-b border-[#aaa] bg-[linear-gradient(180deg,transparent_0,transparent_84%,#d4d4d4_100%),repeating-linear-gradient(135deg,#f1f1f1_0,#f1f1f1_2px,#f9f9f9_2px,#f9f9f9_4px)]">
          <Grid y={250} h={204} />
          <div className={`absolute left-[25px] top-[-6px] flex flex-col whitespace-nowrap text-[53.500px] leading-[61.500px] text-black [-webkit-text-stroke:0.6px_#000] ${AR}`}>
            <span className="tracking-[2.300px]">gpt-4 Transcript</span>
            <span className="tracking-[1.850px]">image transcripts not available for gpt-4</span>
            <span className="tracking-[2.250px]">contact mwickerson999@gmail.com</span>
          </div>
        </div>
        <Canvas />
      </div>
      <div className="flex h-[24px] shrink-0 items-center bg-[#f0f0f0] pl-[5px] pr-[8px] text-[14px] text-[#333]">
        <span className="flex h-[18px] w-[18px] items-center justify-center rounded-full bg-[#2a6fc0] text-[12px] font-bold text-white">!</span>
        <span className="ml-[7px]">Autosave complete (36 seconds ago)</span>
        <span className="ml-auto mr-[27px] text-[#666]">1.0.0007</span>
        <svg width="8" height="8" viewBox="0 0 8 8"><g fill="#bbb"><rect x="6" y="0" width="2" height="2" /><rect x="3" y="3" width="2" height="2" /><rect x="6" y="3" width="2" height="2" /><rect x="0" y="6" width="2" height="2" /><rect x="3" y="6" width="2" height="2" /><rect x="6" y="6" width="2" height="2" /></g></svg>
      </div>
    </div>
  );
}

export default function App() {
  return (
    <div className="flex h-[1069px] w-[1911px] overflow-hidden">
      <LeftWindow />
      <RightWindow />
    </div>
  );
}
